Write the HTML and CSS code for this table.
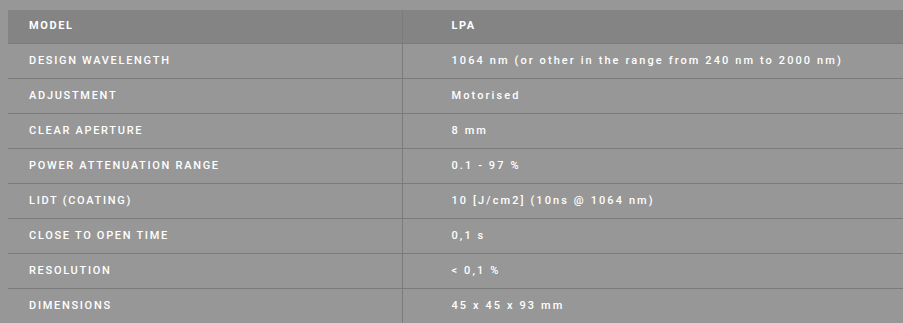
FILE: index.html
```html
<!DOCTYPE html>
<html>
<head>
<meta charset="utf-8">
<link rel="stylesheet" href="styles.css">
</head>
<body>
<table class="specs">
  <thead>
    <tr><th class="label">MODEL</th><th class="value">LPA</th></tr>
  </thead>
  <tbody>
    <tr><td class="label">DESIGN WAVELENGTH</td><td class="value">1064 nm (or other in the range from 240 nm to 2000 nm)</td></tr>
    <tr><td class="label">ADJUSTMENT</td><td class="value">Motorised</td></tr>
    <tr><td class="label">CLEAR APERTURE</td><td class="value">8 mm</td></tr>
    <tr><td class="label">POWER ATTENUATION RANGE</td><td class="value">0.1 - 97 %</td></tr>
    <tr><td class="label">LIDT (COATING)</td><td class="value">10 [J/cm2] (10ns @ 1064 nm)</td></tr>
    <tr><td class="label">CLOSE TO OPEN TIME</td><td class="value">0,1 s</td></tr>
    <tr><td class="label">RESOLUTION</td><td class="value">&lt; 0,1 %</td></tr>
    <tr><td class="label">DIMENSIONS</td><td class="value">45 x 45 x 93 mm</td></tr>
  </tbody>
</table>
</body>
</html>
```
FILE: styles.css
```css
html, body {
  margin: 0;
  background: #979797;
  overflow: hidden;
}
body {
  padding: 10px 0 0 8px;
  font-family: Roboto, "Liberation Sans", Arial, sans-serif;
  color: #ffffff;
}
.specs {
  border-collapse: collapse;
  width: 920px;
  table-layout: fixed;
}
.specs th, .specs td {
  text-align: left;
  font-size: 11px;
  line-height: 14px;
  padding: 0;
  vertical-align: middle;
  box-sizing: border-box;
}
.specs th {
  height: 33px;
  background: #848484;
  font-weight: 700;
  letter-spacing: 1.6px;
  border-bottom: 1px solid #7b7b7b;
  padding-bottom: 1px;
}
.specs td {
  height: 35px;
  font-weight: 500;
  letter-spacing: 1.7px;
  border-bottom: 1px solid #7b7b7b;
}
.specs .label {
  width: 394px;
  padding-left: 21px;
  border-right: 1px solid #7b7b7b;
}
.specs .value {
  padding-left: 49px;
}
.specs td.value {
  letter-spacing: 2.1px;
}
```
